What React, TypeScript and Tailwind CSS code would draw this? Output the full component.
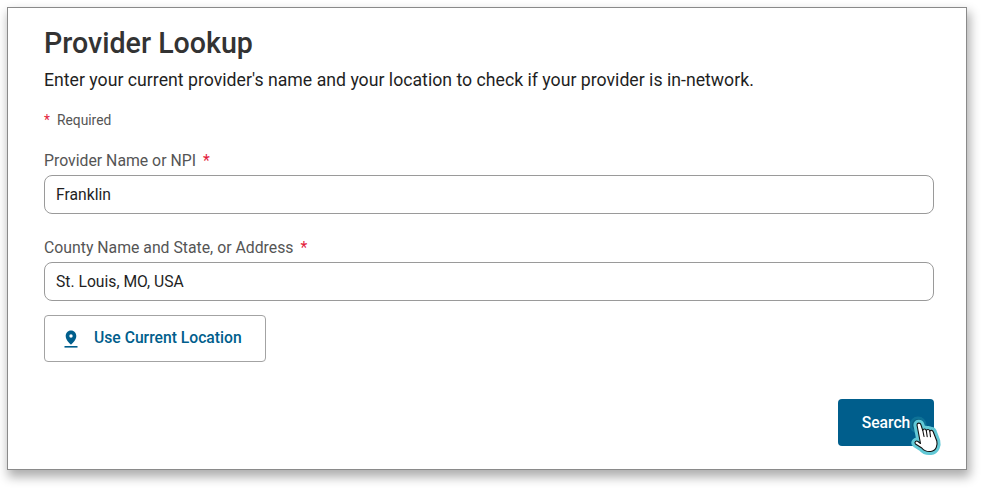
// Provider lookup form
function Field({ label, value }: { label: string; value: string }) {
  return (
    <label className="block">
      <span className="flex h-[20px] items-center text-[15.800px] text-[#555555]">
        {label}
        <span className="ml-[7px] text-[#e31c3d]">*</span>
      </span>
      <input
        readOnly
        value={value}
        className="mt-[4px] block h-[39px] w-full rounded-[8px] border border-[#9a9a9a] bg-white px-[11px] pb-[1px] text-[15.700px] text-[#1f1f1f] outline-none"
      />
    </label>
  );
}

const handPath =
  "M12 12c0-2.500 3.500-2.500 4 0l1.800 5.500c.4-2 3-2 3.500.2.500-1.800 3.200-1.600 3.500.5.700-1.500 3.100-1 3.500.8l3.500 9c1 4-.5 10-6 10.500-4 .4-7-1-9-3.500L10.500 31c-1.500-1.700.5-3.800 2.500-2.500l2.500 2Z";

function HandCursor() {
  return (
    <svg viewBox="0 0 44 50" className="absolute left-[67px] top-[14px] h-[50px] w-[44px]">
      <circle cx="13" cy="12" r="8.500" fill="#1f8ba3" opacity="0.45" />
      <circle cx="13" cy="12" r="5.500" fill="none" stroke="#0a5f7d" strokeWidth="1.200" />
      <path d={handPath} fill="#62c9d6" stroke="#62c9d6" strokeWidth="7" strokeLinejoin="round" />
      <path d={handPath} fill="white" stroke="#111111" strokeWidth="1.100" strokeLinejoin="round" />
      <path d="M17.800 17.500l1.200 6M21.300 17.700l.9 6M24.800 18.200l.7 5.500" fill="none" stroke="#111111" strokeWidth="1.100" strokeLinecap="round" />
    </svg>
  );
}

export default function App() {
  return (
    <div className="h-[490px] w-[1000px] overflow-hidden bg-white pl-[7px] pt-[7px] font-['Roboto',sans-serif]">
      <main className="h-[463px] w-[960px] border border-[#8a8a8a] bg-white pl-[36px] pr-[32px] pt-[17px] shadow-[2px_6px_10px_1px_rgba(0,0,0,0.32)]">
        <h1 className="text-[28.600px] font-medium leading-[36px] text-[#333333]">Provider Lookup</h1>
        <p className="mt-[7px] text-[17.700px] leading-[24px] text-[#1f1f1f]">
          Enter your current provider's name and your location to check if your provider is in-network.
        </p>
        <p className="mt-[18px] flex h-[20px] items-center text-[13.800px] text-[#555555]">
          <span className="w-[13px] text-[#e31c3d]">*</span>
          Required
        </p>

        <div className="mt-[21px] flex flex-col gap-[24px]">
          <Field label="Provider Name or NPI" value="Franklin" />
          <Field label="County Name and State, or Address" value="St. Louis, MO, USA" />
        </div>

        <button className="mt-[14px] flex h-[47px] w-[222px] items-center rounded-[4px] border border-[#a3a3a3] bg-white pl-[19px] text-[15.700px] font-medium text-[#005e8c]">
          <svg viewBox="0 0 14 18" className="h-[18px] w-[14px]">
            <path
              fillRule="evenodd"
              d="M7 0.500C3.700 0.500 1.700 3 1.700 6c0 3.700 3.600 7.400 5.300 8.700 1.700-1.300 5.300-5 5.300-8.700C12.300 3 10.300 0.500 7 0.500ZM7 4.300a1.700 1.700 0 1 1 0 3.400 1.700 1.700 0 0 1 0-3.400Z"
              fill="#005e8c"
            />
            <rect x="0.500" y="16" width="13" height="1.600" fill="#005e8c" />
          </svg>
          <span className="ml-[16px] pb-[1px]">Use Current Location</span>
        </button>

        <div className="mt-[37px] flex justify-end">
          <button className="relative h-[47px] w-[96px] rounded-[4px] bg-[#005e8c] text-[15.700px] font-medium text-white">
            Search
            <HandCursor />
          </button>
        </div>
      </main>
    </div>
  );
}
